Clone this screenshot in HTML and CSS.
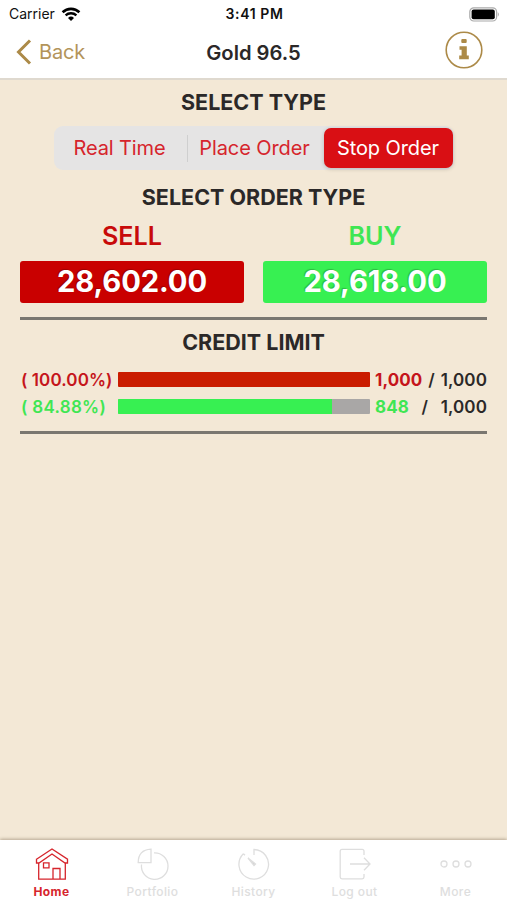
FILE: index.html
```html
<!DOCTYPE html>
<html lang="en">
<head>
    <meta charset="UTF-8">
    <meta name="viewport" content="width=device-width, initial-scale=1.0">
    <title>Gold 96.5</title>
    <link rel="stylesheet" href="styles.css">
</head>
<body>

<div class="app">
    <header class="header">
        <div class="status-bar">
            <div class="carrier">
                <span>Carrier</span>
                <svg width="20" height="15" viewBox="0 0 20 15">
                    <path d="M1.6 5.3 A12 12 0 0 1 18.4 5.3" fill="none" stroke="#000" stroke-width="2.6"/>
                    <path d="M4.6 8.4 A7.8 7.8 0 0 1 15.4 8.4" fill="none" stroke="#000" stroke-width="2.3"/>
                    <path d="M10 14 L7 11 A4.3 4.3 0 0 1 13 11 Z"/>
                </svg>
            </div>
            <span class="clock">3:41 PM</span>
            <svg class="battery" width="31" height="15" viewBox="0 0 31 15">
                <rect x="0.8" y="0.8" width="26.8" height="13.2" rx="4" fill="#fff" stroke="#aaa" stroke-width="1.2"/>
                <rect x="2.6" y="2.6" width="23.2" height="9.6" rx="2"/>
                <path d="M28.8 5 Q31 7.4 28.8 9.8 Z" fill="#aaa"/>
            </svg>
        </div>
        <div class="nav-bar">
            <a class="back">
                <svg width="16" height="26" viewBox="0 0 16 26">
                    <path d="M14 1.5 L2.5 13 L14 24.5" fill="none" stroke="#ac8a48" stroke-width="3"/>
                </svg>
                <span>Back</span>
            </a>
            <h1>Gold 96.5</h1>
            <svg class="info" width="38" height="38" viewBox="0 0 38 38">
                <circle cx="19" cy="19" r="17.8" fill="none" stroke="#ac8a48" stroke-width="1.6"/>
                <path d="M16.3 9 q0 -1 1 -1 h3.4 q1 0 1 1 v2 q0 1 -1 1 h-3.4 q-1 0 -1 -1 Z M14.5 15.2 h7.3 v9.4 h2 v3.6 h-9.6 v-3.6 h2.4 v-5.8 h-2.1 Z" fill="#ac8a48"/>
            </svg>
        </div>
    </header>

    <main class="content">
        <h2>SELECT TYPE</h2>
        <div class="segmented">
            <button class="segment first">Real Time</button>
            <button class="segment">Place Order</button>
            <button class="segment active">Stop Order</button>
        </div>

        <h2 class="order-title">SELECT ORDER TYPE</h2>
        <div class="prices">
            <div class="price sell">
                <h3>SELL</h3>
                <button>28,602.00</button>
            </div>
            <div class="price buy">
                <h3>BUY</h3>
                <button>28,618.00</button>
            </div>
        </div>

        <hr>

        <h2 class="credit-title">CREDIT LIMIT</h2>
        <div class="credit-row sell">
            <span class="percent">( 100.00%)</span>
            <div class="bar"><div class="fill" style="width: 100%"></div></div>
            <div class="amount"><b>1,000</b><span>/</span><span>1,000</span></div>
        </div>
        <div class="credit-row buy">
            <span class="percent">( 84.88%)</span>
            <div class="bar"><div class="fill" style="width: 84.88%"></div></div>
            <div class="amount"><b>848</b><span>/</span><span>1,000</span></div>
        </div>

        <hr class="last">
    </main>

    <nav class="tab-bar">
        <a class="tab active">
            <svg width="34" height="34" viewBox="0 0 34 34">
                <path d="M1.5 12.2 L17 2 L32.5 12.2 V16 H30 L17 7 L4 16 H1.5 Z M3.7 16 V32.2 H30.3 V16"/>
                <path d="M8.5 15.8 h5.5 v5 h-5.5 Z M18 32 V21.5 h7 V32"/>
            </svg>
            <span>Home</span>
        </a>
        <a class="tab">
            <svg width="34" height="34" viewBox="0 0 34 34">
                <path d="M15 2.2 V15.6 H2.2 Q2.2 3 15 2.2 Z"/>
                <path d="M18 5.8 A13.3 13.3 0 1 1 5.5 17.5"/>
            </svg>
            <span>Portfolio</span>
        </a>
        <a class="tab">
            <svg width="34" height="34" viewBox="0 0 34 34">
                <path d="M17 8 V2.5 A14.8 14.8 0 1 1 6.4 6.7 M6.4 6.7 L8 8.3"/>
                <path d="M11 11 L18.5 17 L17 18.5 Z" class="hand"/>
            </svg>
            <span>History</span>
        </a>
        <a class="tab">
            <svg width="34" height="34" viewBox="0 0 34 34">
                <path d="M26 8 V4.2 Q26 2.4 24.2 2.4 H4 Q2.2 2.4 2.2 4.2 V30 Q2.2 31.8 4 31.8 H24.2 Q26 31.8 26 30 V27"/>
                <path d="M12 17 H32 M26 10.8 L32 17 L26 23.2"/>
            </svg>
            <span>Log out</span>
        </a>
        <a class="tab">
            <svg width="34" height="34" viewBox="0 0 34 34">
                <circle cx="5" cy="17" r="3"/>
                <circle cx="17" cy="17" r="3"/>
                <circle cx="29" cy="17" r="3"/>
            </svg>
            <span>More</span>
        </a>
    </nav>
</div>

</body>
</html>
```
FILE: styles.css
```css
* {
    box-sizing: border-box;
}

body {
    margin: 0;
    font-family: Inter, "Liberation Sans", sans-serif;
    color: #2b2828;
    background-color: #f3e8d6;
}

.app {
    display: flex;
    flex-direction: column;
    height: 900px;
}

/* header */
.header {
    height: 80px;
    background-color: #fff;
    border-bottom: 2px solid #dfd9cf;
}

.status-bar {
    display: grid;
    grid-template-columns: 1fr auto 1fr;
    align-items: center;
    height: 28px;
    padding: 0 7px 0 9px;
    font-size: 14px;
    line-height: 28px;
    color: #111;
}

.carrier {
    display: flex;
    align-items: center;
    gap: 6px;
}

.clock {
    font-weight: 600;
    letter-spacing: 0.6px;
}

.battery {
    justify-self: end;
}

.nav-bar {
    display: grid;
    grid-template-columns: 1fr auto 1fr;
    align-items: center;
    height: 48px;
    padding: 0 16px;
}

.back {
    display: flex;
    align-items: center;
    gap: 7px;
    font-size: 20px;
    letter-spacing: -0.2px;
    color: #b3945a;
}

h1 {
    margin: 0;
    font-size: 20.2px;
    font-weight: 600;
}

.info {
    justify-self: end;
    margin: -4px 8px 0 0;
}

/* content */
.content {
    flex: 1;
    padding: 8px 20px 0;
}

h2 {
    margin: 0;
    font-size: 21.5px;
    font-weight: 700;
    line-height: 28px;
    text-align: center;
}

.segmented {
    display: flex;
    width: 400px;
    height: 44px;
    margin: 10px auto 0;
    padding: 2px 1px 2px 2px;
    border-radius: 9px;
    background-color: #e5e4e4;
}

button {
    border: none;
    padding: 0;
    font-family: inherit;
}

.segment {
    position: relative;
    width: 134px;
    font-size: 20px;
    letter-spacing: -0.1px;
    color: #d6252c;
    background: none;
}

.segment.first {
    width: 132px;
    padding-right: 4px;
}

.segment.first::after {
    content: "";
    position: absolute;
    right: 0;
    top: 7px;
    width: 1px;
    height: 27px;
    background-color: #cfcfcf;
}

.segment.active {
    width: 129px;
    margin-left: auto;
    color: #fff;
    background-color: #d90f14;
    border-radius: 7px;
    box-shadow: 0 1px 4px rgba(0, 0, 0, 0.2);
}

.order-title {
    margin-top: 13px;
}

.prices {
    display: flex;
    gap: 19px;
}

.price {
    flex: 1;
}

h3 {
    margin: 0;
    padding-top: 10px;
    font-size: 25.2px;
    font-weight: 600;
    line-height: 30px;
    text-align: center;
}

.sell h3 {
    color: #c80a0a;
}

.buy h3 {
    color: #3fe653;
}

.price button {
    display: block;
    width: 100%;
    height: 42px;
    margin-top: 10px;
    padding-bottom: 1px;
    border-radius: 3px;
    font-size: 29.2px;
    font-weight: 700;
    letter-spacing: -0.1px;
    color: #fff;
    text-shadow: -1px -1px 1px rgba(0, 0, 0, 0.22);
}

.sell button {
    background-color: #c90000;
}

.buy button {
    background-color: #37f052;
}

hr {
    height: 3px;
    margin: 14px 0 0;
    border: none;
    background-color: #7a7770;
}

hr.last {
    margin-top: 11px;
}

/* credit limit */
.credit-title {
    margin: 8px 0 10px;
}

.credit-row {
    display: flex;
    align-items: center;
    height: 27px;
    font-size: 17px;
    font-weight: 600;
    letter-spacing: 0.1px;
}

.percent {
    width: 98px;
    padding-left: 1px;
    white-space: nowrap;
}

.sell .percent,
.sell b {
    color: #c5151b;
}

.buy .percent,
.buy b {
    color: #3fe653;
}

.buy .percent {
    letter-spacing: 0.3px;
}

.bar {
    width: 252px;
    height: 15px;
    border-radius: 1px;
    background-color: #a9a7a6;
    overflow: hidden;
}

.fill {
    height: 100%;
}

.sell .fill {
    background-color: #ca1c00;
}

.buy .fill {
    background-color: #37f052;
}

.amount {
    flex: 1;
    display: flex;
    justify-content: space-between;
    padding-left: 5px;
}

.amount b {
    font-weight: 700;
}

/* bottom tabs */
.tab-bar {
    display: flex;
    height: 60px;
    padding: 0 1px;
    background-color: #fff;
    box-shadow: 0 -1px 3px rgba(90, 70, 40, 0.4);
}

.tab {
    flex: 1;
    display: flex;
    flex-direction: column;
    align-items: center;
    padding-top: 7px;
    font-size: 12px;
    font-weight: 500;
    line-height: 22px;
    letter-spacing: 0.4px;
    color: #dedede;
}

.tab svg {
    flex-shrink: 0;
    fill: none;
    stroke: #dedede;
    stroke-width: 1.3;
}

.tab .hand {
    fill: #ccc;
}

.tab.active {
    font-weight: 700;
    color: #d6252c;
}

.tab.active svg {
    stroke: #d6252c;
}
```
